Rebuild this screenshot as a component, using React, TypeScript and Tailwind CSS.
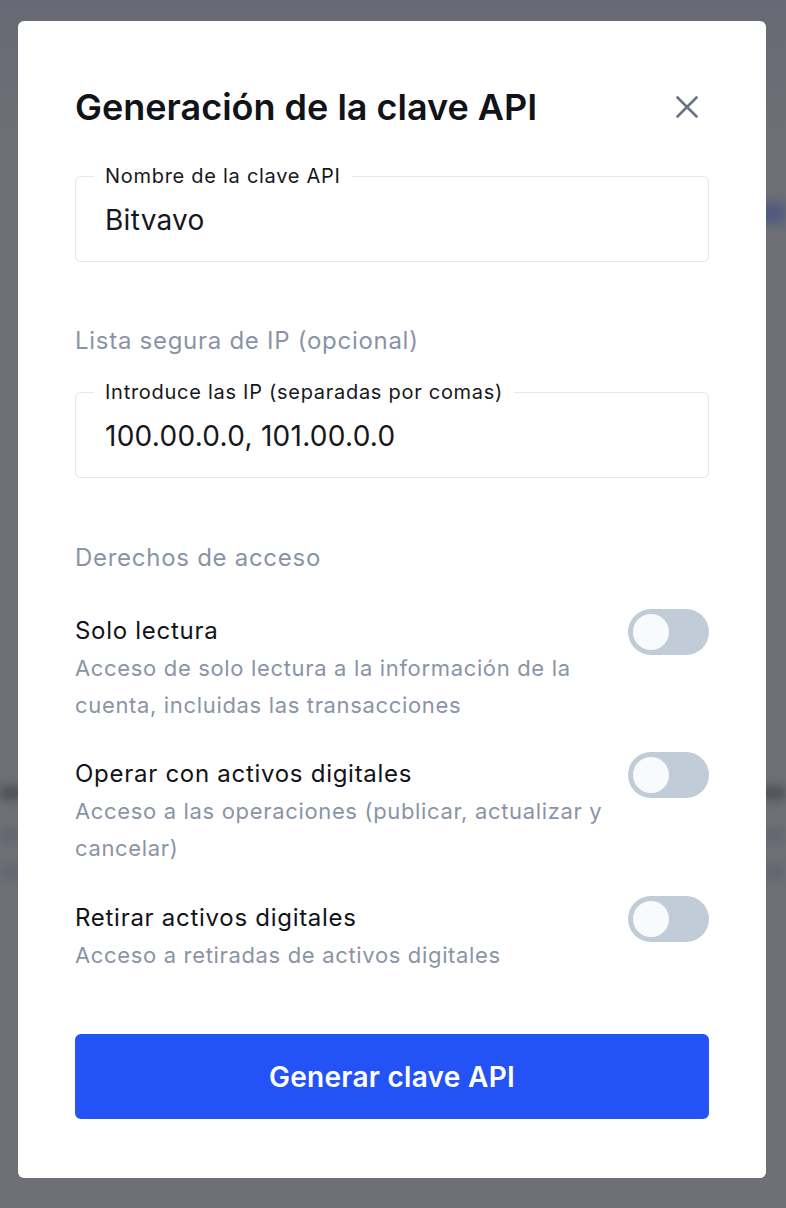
import React from "react";

function Toggle() {
  return (
    <div className="relative h-[46px] w-[81px] shrink-0 rounded-full bg-[#c1ccd8]">
      <div className="absolute left-[5px] top-[5px] h-[36px] w-[36px] rounded-full bg-[#f9fafb]" />
    </div>
  );
}

function Field({ label, value }: { label: string; value: string }) {
  return (
    <div className="relative h-[86px] rounded-md border border-[#e2e8f0]">
      <span className="absolute left-[18px] top-[-13px] bg-white px-[11px] text-[20px] leading-[24px] tracking-[0.036em] text-[#16181d]">
        {label}
      </span>
      <div className="flex h-full items-center pl-[29px] pt-[2px] text-[28px] tracking-[0.01em] text-[#16181d]">
        {value}
      </div>
    </div>
  );
}

function Row({ title, desc, className }: { title: string; desc: string; className: string }) {
  return (
    <div className={"flex items-start justify-between " + className}>
      <div className="w-[548px]">
        <div className="text-[24px] leading-[44px] tracking-[0.03em] text-[#111318]">{title}</div>
        <div className="mt-[-3px] text-[22px] leading-[37px] tracking-[0.03em] text-[#8a94a6]">{desc}</div>
      </div>
      <Toggle />
    </div>
  );
}

export default function App() {
  return (
    <div
      className="relative min-h-[1208px] overflow-hidden bg-[#6e7076] pb-[31px] pl-[18px] pr-[20px] pt-[21px]"
      style={{ fontFamily: "Inter, 'Noto Sans', sans-serif" }}
    >
      <div className="pointer-events-none absolute inset-0">
        <div className="absolute left-0 right-0 top-0 h-[160px] bg-gradient-to-b from-[#676a74] to-[#6e7076]" />
        <div className="absolute right-0 top-[202px] h-[22px] w-[40px] bg-[#4f5a80] blur-[6px]" />
        <div className="absolute left-0 right-0 top-[786px] h-[14px] bg-[#505258] blur-[5px]" />
        <div className="absolute left-0 right-0 top-[828px] h-[14px] bg-[#646771] blur-[5px]" />
        <div className="absolute left-0 right-0 top-[864px] h-[16px] bg-[#646771] blur-[5px]" />
      </div>

      <div className="relative rounded-md bg-white px-[57px] pb-[59px] pt-[64px]">
        <div className="flex h-[44px] items-center justify-between">
          <h1 className="text-[36px] font-semibold leading-[44px] text-[#111318]">
            Generación de la clave API
          </h1>
          <svg width="22" height="22" viewBox="0 0 22 22" className="mr-[11px]">
            <path
              d="M1.5 1.5 L20.5 20.5 M20.5 1.5 L1.5 20.5"
              stroke="#687484"
              strokeWidth="2.6"
              strokeLinecap="round"
              fill="none"
            />
          </svg>
        </div>

        <div className="mt-[47px]">
          <Field label="Nombre de la clave API" value="Bitvavo" />
        </div>

        <div className="mt-[64px] text-[24px] leading-[30px] tracking-[0.03em] text-[#8a94a6]">
          Lista segura de IP (opcional)
        </div>

        <div className="mt-[36px]">
          <Field label="Introduce las IP (separadas por comas)" value="100.00.0.0, 101.00.0.0" />
        </div>

        <div className="mt-[65px] text-[24px] leading-[30px] tracking-[0.03em] text-[#8a94a6]">
          Derechos de acceso
        </div>

        <Row
          className="mt-[36px]"
          title="Solo lectura"
          desc="Acceso de solo lectura a la información de la cuenta, incluidas las transacciones"
        />
        <Row
          className="mt-[28px]"
          title="Operar con activos digitales"
          desc="Acceso a las operaciones (publicar, actualizar y cancelar)"
        />
        <Row
          className="mt-[29px]"
          title="Retirar activos digitales"
          desc="Acceso a retiradas de activos digitales"
        />

        <button className="mt-[60px] flex h-[85px] w-full items-center justify-center rounded-md bg-[#2353f7] text-[28px] font-semibold tracking-[0.01em] text-white">
          Generar clave API
        </button>
      </div>
    </div>
  );
}
